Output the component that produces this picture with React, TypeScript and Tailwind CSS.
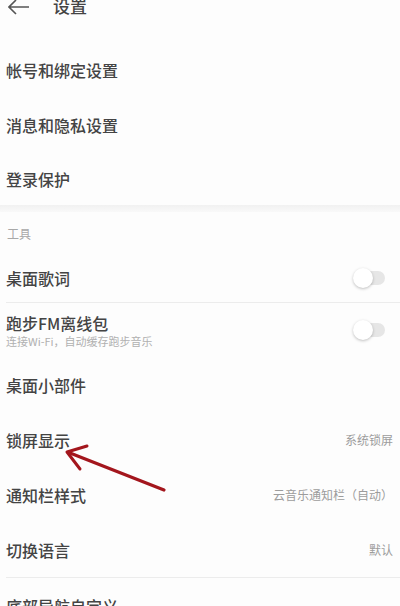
import React from 'react';

const font = { fontFamily: '"Noto Sans CJK SC", "Noto Sans", sans-serif' };

function Toggle() {
  return (
    <div className="relative h-[14px] w-[30px] rounded-full bg-[#e6e6e6]">
      <div className="absolute -left-[2px] -top-[3px] h-[20px] w-[20px] rounded-full bg-white shadow-[0_1px_3px_rgba(0,0,0,0.25)]" />
    </div>
  );
}

function Row({ title, value, h, children }: { title: string; value?: string; h: string; children?: React.ReactNode }) {
  return (
    <div className={`flex items-center justify-between pl-[6px] pr-[7px] ${h}`}>
      <span className="text-[16px] leading-none font-medium text-[#444]">{title}</span>
      {value && <span className="text-[12px] leading-none text-[#9c9c9c]">{value}</span>}
      {children}
    </div>
  );
}

export default function App() {
  return (
    <div className="relative h-[606px] w-[400px] overflow-hidden bg-[#fdfdfd]" style={font}>
      <header className="flex h-[43px] items-start gap-[23px] pl-[8px]">
        <svg width="22" height="16" viewBox="0 0 22 16" className="-mt-[1px]">
          <path d="M21 8H1M8 1L1 8l7 7" fill="none" stroke="#555" strokeWidth="1.6" />
        </svg>
        <span className="-mt-[2px] text-[17px] leading-[16px] font-medium text-[#444]">设置</span>
      </header>

      <Row title="帐号和绑定设置" h="h-[54px]" />
      <Row title="消息和隐私设置" h="h-[55px]" />
      <Row title="登录保护" h="h-[53px]" />

      <div className="h-[7px] bg-gradient-to-b from-[#f1f1f1] to-[#f9f9f9]" />

      <div className="flex h-[42px] items-center pl-[7px] pt-[2px]">
        <span className="text-[12px] leading-none text-[#a8a8a8]">工具</span>
      </div>

      <Row title="桌面歌词" h="h-[48px]">
        <div className="mr-[8px]"><Toggle /></div>
      </Row>
      <div className="ml-[6px] h-px bg-[#ececec]" />

      <div className="flex h-[54px] items-center justify-between pl-[6px] pr-[15px]">
        <div className="flex flex-col gap-[5px] pt-[2px]">
          <span className="text-[16px] leading-none font-medium text-[#444]">跑步FM离线包</span>
          <span className="text-[11px] leading-none text-[#b0b0b0]">连接Wi-Fi，自动缓存跑步音乐</span>
        </div>
        <Toggle />
      </div>

      <Row title="桌面小部件" h="h-[55px]" />
      <Row title="锁屏显示" value="系统锁屏" h="h-[55px]" />
      <Row title="通知栏样式" value="云音乐通知栏（自动）" h="h-[55px]" />
      <Row title="切换语言" value="默认" h="h-[55px]" />
      <div className="ml-[6px] h-px bg-[#ececec]" />
      <Row title="底部导航自定义" h="h-[55px]" />

      <svg className="pointer-events-none absolute left-0 top-0" width="400" height="606">
        <path d="M164 490L70 453" stroke="#a3161d" strokeWidth="3.2" strokeLinecap="round" fill="none" />
        <path d="M87 446L67 452L80 469" stroke="#a3161d" strokeWidth="3" strokeLinecap="round" strokeLinejoin="round" fill="none" />
      </svg>
    </div>
  );
}
